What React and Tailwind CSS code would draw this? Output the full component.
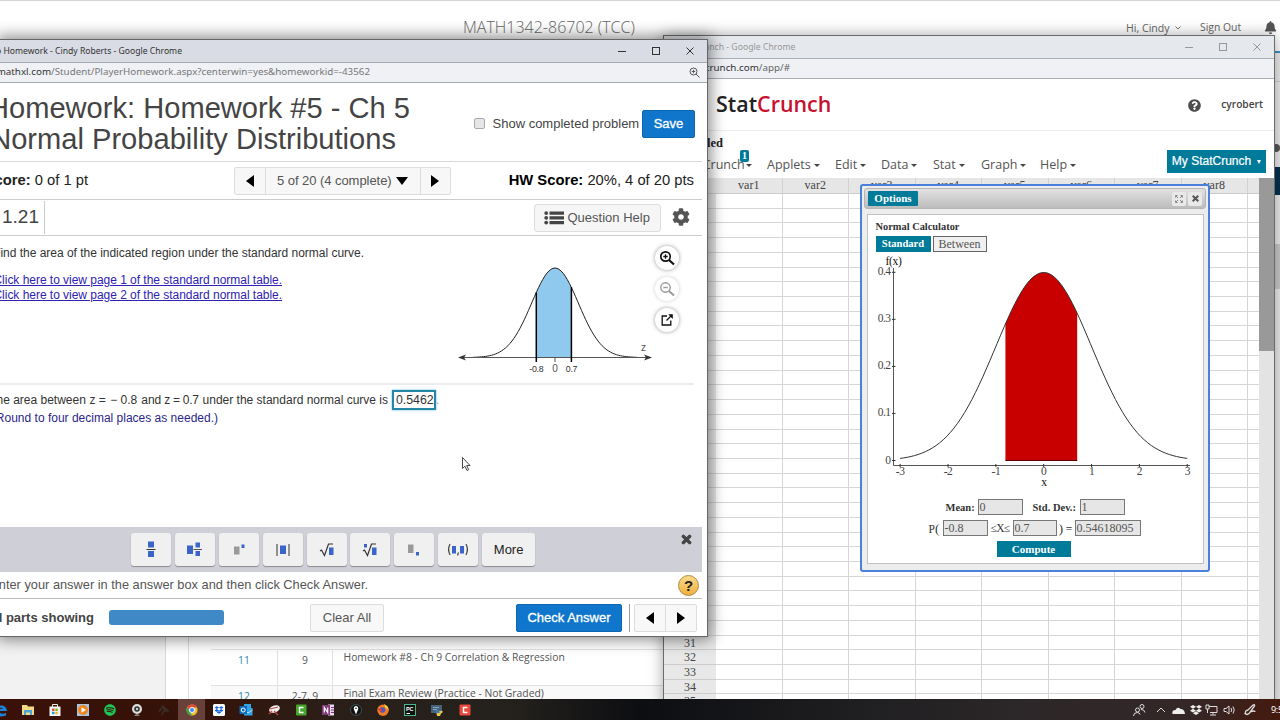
import { FaBell, FaCog, FaDropbox, FaQuestionCircle, FaSpotify, FaTimes } from "react-icons/fa";

/* ---------- shared bits ---------- */

function WindowButtons({ className = "" }) {
  return (
    <svg width="90" height="12" viewBox="0 0 90 12" fill="none" stroke="currentColor" className={className}>
      <path d="M2 6.5h8" />
      <rect x="36.5" y="2.5" width="7" height="7" />
      <path d="M70.5 2.5l7 7M77.5 2.5l-7 7" />
    </svg>
  );
}

function bell(cx, base, unit, height, from, to) {
  const points = [];
  for (let i = 0; i <= 80; i++) {
    const z = from + ((to - from) * i) / 80;
    points.push(`${(cx + z * unit).toFixed(2)} ${(base - height * Math.exp((-z * z) / 2)).toFixed(2)}`);
  }
  return points.join("L");
}

/* ---------- course page behind the windows ---------- */

function CoursePage() {
  return (
    <div className="flex h-[720px] w-[1280px] flex-col border-t border-[#d4d4d4] bg-white font-['Open_Sans',sans-serif] text-[#666]">
      <div className="flex h-[50px] items-start pt-[16px]">
        <div className="ml-[463px] w-[663px] text-[16px] leading-[21px] font-light">MATH1342-86702 (TCC)</div>
        <div className="flex w-[74px] items-center gap-[5px] text-[10.600px] leading-[22px]">
          Hi, Cindy
          <svg width="6" height="4" viewBox="0 0 6 4" fill="none" stroke="#777">
            <path d="M.5.5L3 3 5.500.5" />
          </svg>
        </div>
        <div className="w-[64px] text-[10.400px] leading-[21px]">Sign Out</div>
        <FaBell className="mt-[4px] h-[13px] w-[13px] shrink-0 text-[#555]" />
      </div>
      <div className="ml-auto flex w-[8px] flex-1 flex-col bg-[#ececec]">
        <div className="h-[2px] bg-[#3c93bd]" />
        <div className="mt-[28px] h-px bg-[#ccc]" />
        <div className="mt-[62px] h-[8px] rounded-full bg-[#555]" />
        <div className="mt-[15px] h-[28px] bg-[#06324d]" />
        <div className="mt-[49px] h-[45px] bg-[#c9c9c9]" />
      </div>
    </div>
  );
}

function AssignmentTable() {
  const rows = [
    { no: "11", chapter: "9", name: "Homework #8 - Ch 9 Correlation & Regression" },
    { no: "12", chapter: "2-7, 9", name: "Final Exam Review (Practice - Not Graded)" },
  ];
  return (
    <div className="absolute top-[630px] left-0 flex h-[70px] w-[664px] bg-white font-['Open_Sans',sans-serif] text-[#555]">
      <div className="w-[166px] border-r border-[#d8d8d8] bg-[#f2f2f2]" />
      <div className="w-[23px] border-r border-[#ddd]" />
      <div className="ml-[22px] flex-1 overflow-hidden pt-[19px]">
        {rows.map((row) => (
          <div key={row.no} className="flex h-[36px] border-t border-[#e2e2e2] text-[10.350px] odd:bg-white even:bg-[#f9f9f9]">
            <div className="w-[67px] border-r border-[#e2e2e2] pt-[3px] text-center text-[#2a87a8]">{row.no}</div>
            <div className="w-[55px] border-r border-[#e2e2e2] pt-[3px] text-center">{row.chapter}</div>
            <div className="pl-[10.500px] whitespace-nowrap">{row.name}</div>
          </div>
        ))}
      </div>
    </div>
  );
}

/* ---------- StatCrunch window ---------- */

const menus = [
  { label: "Applets", width: "w-[68px]" },
  { label: "Edit", width: "w-[46px]" },
  { label: "Data", width: "w-[52px]" },
  { label: "Stat", width: "w-[48px]" },
  { label: "Graph", width: "w-[59px]" },
  { label: "Help", width: "w-[50px]" },
];

function Caret() {
  return <span className="border-x-[3px] border-t-[3px] border-x-transparent border-t-[#444]" />;
}

function DataGrid() {
  const cols = [1, 2, 3, 4, 5, 6, 7, 8];
  return (
    <div className="flex h-[522px] overflow-hidden font-['Liberation_Serif',serif] text-[12px] text-[#444]">
      <div className="w-[595px] shrink-0">
        <div className="flex h-[16px] border-b border-[#ccc] bg-[#e6e6e6] leading-[15px]">
          <div className="w-[52px] shrink-0" />
          {cols.map((n) => (
            <div key={n} className="w-[66.5px] shrink-0 border-r border-[#d2d2d2] text-center">
              var{n}
            </div>
          ))}
        </div>
        {Array.from({ length: 35 }, (_, i) => (
          <div key={i} className="flex h-[14.73px] leading-[14px]">
            <div className="w-[52px] shrink-0 border-b border-[#ccc] bg-[#e8e8e8] text-center">{i + 1}</div>
            {cols.map((n) => (
              <div key={n} className="w-[66.5px] shrink-0 border-r border-b border-[#d6d6d6]" />
            ))}
            <div className="flex-1 border-b border-[#d6d6d6]" />
          </div>
        ))}
      </div>
      <div className="flex-1 bg-[#e3e3e3]">
        <div className="h-[173px] bg-[#999]" />
      </div>
    </div>
  );
}

function StatCrunchWindow() {
  return (
    <div className="absolute top-[35px] left-[663px] flex h-[672px] w-[612px] flex-col border border-[#6b6b6b] bg-white shadow-[0_0_14px_rgba(0,0,0,0.35)]">
      <div className="flex h-[23px] items-center border-b border-[#a9adb8] bg-[#e5e8ed] text-[#999]">
        <div className="flex w-[131.500px] justify-end pt-px font-['Noto_Sans',sans-serif] text-[8.700px] whitespace-nowrap">
          StatCrunch - Google Chrome
        </div>
        <WindowButtons className="ml-[387px]" />
      </div>
      <div className="flex h-[20px] items-center border-b border-[#a9adb8] bg-[#f0f1f5] font-['Noto_Sans',sans-serif] text-[9.800px] whitespace-nowrap text-[#666]">
        <div className="flex w-[126px] justify-end">
          <span className="text-[#333]">www.statcrunch.com</span>/app/#
        </div>
      </div>
      <div className="flex h-[52px] items-center border-b border-[#ededed] font-['Open_Sans',sans-serif]">
        <div className="ml-[52px] text-[21.400px] font-semibold text-[#222]">
          Stat<span className="text-[#c8102e]">Crunch</span>
        </div>
        <FaQuestionCircle className="mt-px ml-auto h-[13px] w-[13px] text-[#4d4d4d]" />
        <div className="mr-[11px] ml-[20px] pt-px text-[10.200px] font-semibold text-[#444]">cyrobert</div>
      </div>
      <div className="flex h-[47px]">
        <div className="flex w-[103px] flex-col">
          <div className="flex h-[25px] w-[59px] items-center justify-end font-['Liberation_Serif',serif] text-[12.500px] font-bold text-[#222]">
            Untitled
          </div>
          <div className="relative flex h-[18px] items-center gap-[3px] pl-[16px] font-['Open_Sans',sans-serif] text-[12.500px] text-[#555]">
            <span className="w-[63px] text-right">StatCrunch</span>
            <Caret />
            <span className="absolute -top-[6px] left-[76px] h-[12px] w-[9px] rounded-[2px] bg-[#007a99] text-center font-['Liberation_Serif',serif] text-[10px] leading-[12px] font-bold text-white">
              1
            </span>
          </div>
        </div>
        <div className="flex h-[18px] pt-[25px] font-['Open_Sans',sans-serif] text-[12.500px] leading-[18px] text-[#555]">
          {menus.map((m) => (
            <div key={m.label} className={`flex h-[18px] items-center gap-[3px] ${m.width}`}>
              {m.label}
              <Caret />
            </div>
          ))}
        </div>
        <div className="mt-[19px] mr-[8px] ml-auto flex h-[23px] w-[99px] items-center justify-center gap-[6px] bg-[#007a99] font-['Liberation_Sans',sans-serif] text-[12px] whitespace-nowrap text-white [-webkit-text-stroke:0.2px]">
          <span className="pb-[2px]">My StatCrunch</span>
          <span className="border-x-[2.500px] border-t-[4px] border-x-transparent border-t-white" />
        </div>
      </div>
      <DataGrid />
    </div>
  );
}

/* ---------- Normal calculator dialog ---------- */

function NormalChart() {
  const x = (z) => 175.7 + 47.85 * z;
  return (
    <svg width="333" height="238" viewBox="0 0 333 238" className="block font-['Liberation_Serif',serif] text-[11.500px]" fill="#444">
      <text x="17.500" y="11.500" fill="#111" letterSpacing="-0.3">f(x)</text>
      <path
        d={`M${x(-0.8)} 207.500L${bell(175.7, 207.5, 47.85, 188, -0.8, 0.7)}L${x(0.7)} 207.500Z`}
        fill="#c80000"
      />
      <path d={`M${x(-0.8)} 207.500H${x(0.7)}`} stroke="#600000" />
      <path d={`M${bell(175.7, 207.5, 47.85, 188, -3, 3)}`} fill="none" stroke="#333" />
      <path d="M25.500 15V212.500H322" fill="none" stroke="#555" />
      {[0, 1, 2, 3, 4].map((n) => (
        <g key={n}>
          <path d={`M24 ${207.5 - 47.05 * n}h3.500`} stroke="#333" />
          <text x="22.500" y={210.5 - 47.05 * n} textAnchor="end" letterSpacing="-0.5">
            {n === 0 ? "0" : `0.${n}`}
          </text>
        </g>
      ))}
      {[-3, -2, -1, 0, 1, 2, 3].map((n) => (
        <g key={n}>
          <path d={`M${x(n)} 211v3`} stroke="#333" />
          <text x={x(n)} y="221.500" textAnchor="middle" letterSpacing="-0.5">{n}</text>
        </g>
      ))}
      <text x="176" y="233" textAnchor="middle" fill="#111">x</text>
    </svg>
  );
}

function Field({ value, className }) {
  return (
    <div className={`h-[16px] border border-[#777] bg-[#e6e6e6] pl-px text-[12px] leading-[14px] text-[#555] ${className}`}>
      {value}
    </div>
  );
}

function CalculatorDialog() {
  return (
    <div className="absolute top-[184px] left-[860px] flex h-[388px] w-[350px] flex-col rounded-[3px] border-2 border-[#4a80dc] bg-[#ededed] px-[2px] pt-[2px] font-['Liberation_Serif',serif] text-[#333]">
      <div className="flex h-[21px] items-center gap-[2px] rounded-[3px] border border-[#b5b5b5] bg-linear-to-b from-[#e2e2e2] to-[#bcbcbc] px-[3px]">
        <div className="h-[15px] w-[50px] rounded-[1px] bg-[#007a99] text-center text-[11px] leading-[15px] font-bold text-white">Options</div>
        <div className="ml-auto flex h-[14px] w-[14px] items-center justify-center rounded-[2px] bg-[#e9e9e9]">
          <svg width="8" height="8" viewBox="0 0 8 8" fill="none" stroke="#888">
            <path d="M.5 2.500v-2h2M5.500.5h2v2M7.500 5.500v2h-2M2.500 7.500h-2v-2M1 1l2 2M7 1L5 3M7 7L5 5M1 7l2-2" />
          </svg>
        </div>
        <div className="flex h-[14px] w-[14px] items-center justify-center rounded-[2px] bg-[#e9e9e9]">
          <svg width="7" height="7" viewBox="0 0 7 7" stroke="#555" strokeWidth="2">
            <path d="M.7.7l5.600 5.600M6.300.7L.7 6.300" />
          </svg>
        </div>
      </div>
      <div className="mx-[2.500px] mt-[5px] flex h-[350px] flex-col border border-[#c2c2c2] bg-white">
        <div className="mt-[5px] ml-[8px] h-[14px] text-[10.400px] leading-[14px] font-bold">Normal Calculator</div>
        <div className="mt-[2px] ml-[8px] flex h-[16px] gap-[2px] text-[12px] leading-[16px]">
          <div className="w-[55px] bg-[#007a99] text-center text-[10.600px] font-bold text-white">Standard</div>
          <div className="w-[54px] border border-[#666] bg-[#f0f0f0] text-center leading-[14px] text-[#555]">Between</div>
        </div>
        <div className="mt-px">
          <NormalChart />
        </div>
        <div className="mt-[8px] ml-[78px] flex h-[16px] items-center text-[10.500px] font-bold">
          <span className="w-[32px] pt-px">Mean:</span>
          <Field value="0" className="w-[45px] font-normal" />
          <span className="w-[47px] pt-px pl-[10px] whitespace-nowrap">Std. Dev.:</span>
          <Field value="1" className="ml-[10px] w-[45px] font-normal" />
        </div>
        <div className="mt-[4px] ml-[61px] flex h-[17px] items-center text-[11.500px]">
          <span className="w-[14px] pt-[3px] leading-[14px]">
            P<span className="text-[13px]">(</span>
          </span>
          <Field value="-0.8" className="w-[45px]" />
          <span className="w-[25px] pt-[2px] text-center tracking-[-0.6px]">≤X≤</span>
          <Field value="0.7" className="w-[44px]" />
          <span className="w-[18px] pt-[3px] text-center leading-[14px] whitespace-nowrap">
            <span className="text-[13px]">)</span> =
          </span>
          <Field value="0.54618095" className="w-[66px]" />
        </div>
        <div className="mt-[5px] ml-[129px] h-[16px] w-[74px] bg-[#007a99] text-center text-[11px] leading-[16px] font-bold text-white">
          Compute
        </div>
      </div>
    </div>
  );
}

/* ---------- Homework window ---------- */

function Arrow({ left }) {
  return (
    <svg width="8" height="12" viewBox="0 0 8 12">
      <path d={left ? "M8 0v12L0 6z" : "M0 0v12l8-6z"} fill="#000" />
    </svg>
  );
}

function NormalCurve() {
  return (
    <svg width="200" height="115" viewBox="455 262 200 115" className="block font-['Liberation_Sans',sans-serif]" fill="#333">
      <path d={`M536.300 357.500L${bell(555, 357.5, 23.4, 89.5, -0.8, 0.7)}L571.400 357.500Z`} fill="#8fcaee" />
      <path d={`M${bell(555, 357.5, 23.4, 89.5, -3.5, 3.5)}`} fill="none" stroke="#222" />
      <path d="M462 357.500h187M555 357v5" stroke="#555" />
      <path d="M458 357.500l8-3-2 3 2 3zM652 357.500l-8-3 2 3-2 3z" fill="#333" />
      <path d="M536.300 292.500V362M571.400 287V362" stroke="#000" strokeWidth="1.500" />
      <text x="536.300" y="372" fontSize="8.800" letterSpacing="-0.300" textAnchor="middle">-0.8</text>
      <text x="555" y="371.500" fontSize="10" textAnchor="middle" fill="#555">0</text>
      <text x="571.500" y="372" fontSize="8.800" letterSpacing="-0.300" textAnchor="middle">0.7</text>
      <text x="643.500" y="350.500" fontSize="10" textAnchor="middle" fill="#555">z</text>
    </svg>
  );
}

function ZoomTools() {
  const base = "flex h-[24px] w-[24px] items-center justify-center rounded-full bg-white";
  return (
    <div className="flex flex-col gap-[7px]">
      <div className={`${base} shadow-[0_0_4px_rgba(0,0,0,0.4)]`}>
        <svg width="16" height="16" viewBox="0 0 16 16" fill="none" stroke="#111" strokeWidth="1.700">
          <circle cx="6.500" cy="6.500" r="4.700" />
          <path d="M10 10l5 4.500" strokeWidth="2.200" />
          <path d="M6.500 4.300v4.400M4.300 6.500h4.400" strokeWidth="1.300" />
        </svg>
      </div>
      <div className={`${base} shadow-[0_0_4px_rgba(0,0,0,0.2)]`}>
        <svg width="16" height="16" viewBox="0 0 16 16" fill="none" stroke="#999" strokeWidth="1.400">
          <circle cx="6.500" cy="6.500" r="4.700" />
          <path d="M10 10l5 4.500" strokeWidth="2" />
          <path d="M4.300 6.500h4.400" />
        </svg>
      </div>
      <div className={`${base} shadow-[0_0_4px_rgba(0,0,0,0.4)]`}>
        <svg width="12" height="12" viewBox="0 0 12 12" fill="none" stroke="#111" strokeWidth="1.300">
          <path d="M6 2H1.200v9h8.600V6.500" />
          <path d="M5.500 6.500L10.500 1.500" />
          <path d="M7.200.3H11.800v4.600z" fill="#111" stroke="none" />
        </svg>
      </div>
    </div>
  );
}

const blue = "#3b64c8";

const mathKeys = [
  <g key="fraction">
    <rect x="12" y="3.500" width="6" height="6" fill={blue} />
    <rect x="12" y="13" width="6" height="6" fill={blue} />
    <path d="M10.500 11.500h9" stroke="#333" />
  </g>,
  <g key="mixed">
    <rect x="7" y="7.500" width="6" height="8.500" fill={blue} />
    <rect x="15.500" y="4.500" width="4.500" height="5" fill={blue} />
    <rect x="15.500" y="13" width="4.500" height="5" fill={blue} />
    <path d="M13.500 11.500h8.500" stroke="#555" />
  </g>,
  <g key="exponent">
    <rect x="10" y="8.500" width="5.500" height="8" fill="#999" />
    <rect x="17.500" y="6.500" width="3" height="3.500" fill={blue} />
  </g>,
  <g key="absolute">
    <rect x="12" y="7.500" width="6" height="8.500" fill={blue} />
    <path d="M9 6v12M21 6v12" stroke="#333" />
  </g>,
  <g key="root">
    <rect x="17" y="9.500" width="4.500" height="7.500" fill={blue} />
    <path d="M8 13l1.500-1 3 5.500L16.500 6H21" fill="none" stroke="#333" strokeWidth="1.200" />
  </g>,
  <g key="nth-root">
    <rect x="9" y="6" width="3" height="3.500" fill={blue} />
    <rect x="17" y="9.500" width="4.500" height="7.500" fill={blue} />
    <path d="M8 13l1.500-1 3 5.500L16.500 6H21" fill="none" stroke="#333" strokeWidth="1.200" />
  </g>,
  <g key="subscript">
    <rect x="9" y="6.500" width="5.500" height="8.500" fill="#999" />
    <rect x="17" y="14" width="3" height="3.500" fill={blue} />
  </g>,
  <g key="interval">
    <rect x="9" y="8" width="4" height="7.500" fill={blue} />
    <rect x="17" y="8" width="4" height="7.500" fill={blue} />
    <path d="M7 6Q4.200 11.500 7 17M23 6Q25.800 11.500 23 17M15.500 14.500L14.500 17.500" fill="none" stroke="#444" strokeWidth="1.200" />
  </g>,
];

function MathToolbar() {
  return (
    <div className="flex h-[45px] w-[702px] items-start gap-[3.900px] bg-[#cfcfd8] pt-[6px] pl-[131px]">
      {mathKeys.map((icon) => (
        <div key={icon.key} className="flex h-[33px] w-[40px] justify-center rounded-[3px] bg-[#f0f0f0] pt-[5px] shadow-[0_1px_1px_#8a8a90]">
          <svg width="30" height="24" viewBox="0 0 30 24">{icon}</svg>
        </div>
      ))}
      <div className="h-[33px] w-[53px] rounded-[3px] bg-[#f0f0f0] text-center text-[13px] leading-[33px] text-[#222] shadow-[0_1px_1px_#8a8a90]">
        More
      </div>
      <FaTimes className="mr-[9px] ml-auto h-[13px] w-[13px] text-[#444]" stroke="#444" strokeWidth="40" />
    </div>
  );
}

function HomeworkWindow() {
  return (
    <div className="absolute top-[39px] left-0 flex h-[598px] w-[708px] flex-col overflow-visible border-t border-r border-b border-[#666] bg-white font-['Liberation_Sans',sans-serif] text-[#444] shadow-[0_0_14px_3px_rgba(0,0,0,0.45)]">
      <div className="flex h-[23px] shrink-0 items-center border-b border-[#a5a9b4] bg-[#d9dce4] font-['Noto_Sans',sans-serif] text-[8.600px] whitespace-nowrap text-[#333]">
        <div className="flex w-[182px] justify-end">Do Homework - Cindy Roberts - Google Chrome</div>
        <WindowButtons className="ml-[434px] text-[#333]" />
      </div>
      <div className="flex h-[20px] shrink-0 items-center border-b border-[#a5a9b4] bg-[#eff1f5] font-['Noto_Sans',sans-serif] text-[9.800px] whitespace-nowrap text-[#777]">
        <div className="flex w-[370px] justify-end">
          <span className="text-[#333]">www.mathxl.com</span>/Student/PlayerHomework.aspx?centerwin=yes&amp;homeworkid=-43562
        </div>
        <svg width="11" height="11" viewBox="0 0 11 11" fill="none" stroke="#555" className="ml-[318.500px]">
          <circle cx="4.500" cy="4.500" r="3.500" />
          <path d="M7 7l3.500 3.500M4.500 2.800v3.400M2.800 4.500h3.400" />
        </svg>
      </div>

      <div className="flex h-[79px] w-[702px] shrink-0 border-b border-[#d8d8d8]">
        <div className="w-[410px] pt-[10px] text-[29.100px] leading-[31px] whitespace-nowrap">
          <div className="flex justify-end">Homework: Homework #5 - Ch 5</div>
          <div className="flex w-[396px] justify-end">Normal Probability Distributions</div>
        </div>
        <div className="mt-[35px] ml-[64px] h-[11px] w-[11px] rounded-[2px] border border-[#aaa] bg-[#e6e6e6]" />
        <div className="mt-[31px] ml-[7.500px] w-[149.500px] text-[13px] leading-[19px]">Show completed problem</div>
        <div className="mt-[27px] h-[28px] w-[53px] rounded-[2px] border border-[#0c66b0] bg-[#0f76cb] text-center text-[13px] leading-[25px] text-white [-webkit-text-stroke:0.300px]">
          Save
        </div>
      </div>

      <div className="flex h-[38px] w-[702px] shrink-0 items-center border-b border-[#ccc] text-[14.750px] text-[#222]">
        <div className="flex w-[88px] justify-end whitespace-pre">
          <b>Score: </b>0 of 1 pt
        </div>
        <div className="ml-[146px] flex h-[28px] w-[217px] rounded-[2px] border border-[#ddd] bg-[#f7f7f7] text-[13px] text-[#555]">
          <div className="flex w-[31px] items-center justify-center border-r border-[#ddd]">
            <Arrow left />
          </div>
          <div className="flex w-[155px] items-center gap-[4px] border-r border-[#ddd] pl-[11px] whitespace-nowrap">
            <span className="-tracking-[0.050px]">5 of 20 (4 complete)</span>
            <span className="border-x-[6px] border-t-[8px] border-x-transparent border-t-black" />
          </div>
          <div className="flex flex-1 items-center justify-center pr-px">
            <Arrow />
          </div>
        </div>
        <div className="ml-auto pr-[8px] whitespace-pre">
          <b className="text-black">HW Score: </b>20%, 4 of 20 pts
        </div>
      </div>

      <div className="flex h-[36px] w-[702px] shrink-0 items-center border-b border-[#ccc]">
        <div className="flex h-[33px] w-[45px] items-center justify-end border-r border-[#ccc] pr-[5px] text-[19px]">1.21</div>
        <div className="ml-auto flex h-[28px] w-[127px] items-center rounded-[3px] border border-[#ddd] bg-[#f6f6f6] pl-[9px] text-[13px] text-[#555]">
          <svg width="20" height="14" viewBox="0 0 20 14" fill="#444" className="mr-[3.500px]">
            <path d="M5.500.5H20v3.200H5.500zM5.500 5.200H20v3.200H5.500zM5.500 10H20v3.200H5.500z" />
            <circle cx="2.200" cy="2.100" r="1.900" />
            <circle cx="2.200" cy="6.800" r="1.900" />
            <circle cx="2.200" cy="11.600" r="1.900" />
          </svg>
          Question Help
        </div>
        <FaCog className="mr-[12px] mb-[2px] ml-[11px] h-[18px] w-[18px] text-[#555]" />
      </div>

      <div className="flex h-[149px] w-[694px] shrink-0 border-b-2 border-[#ececec] text-[12px] leading-[15px]">
        <div className="w-[364px] pt-[10px] whitespace-nowrap text-[#333]">
          <div className="flex justify-end -tracking-[0.020px]">Find the area of the indicated region under the standard normal curve.</div>
          <div className="mt-[12px] w-[282px] -tracking-[0.030px] text-[#2d22b4]">
            <div className="flex justify-end"><u>Click here to view page 1 of the standard normal table.</u></div>
            <div className="flex justify-end"><u>Click here to view page 2 of the standard normal table.</u></div>
          </div>
        </div>
        <div className="mt-[26px] ml-[91px] w-[200px]">
          <NormalCurve />
        </div>
        <div className="mt-[10px]">
          <ZoomTools />
        </div>
      </div>

      <div className="h-[142px] shrink-0 pt-[5px] text-[12px] text-[#333]">
        <div className="flex h-[20px] items-center whitespace-nowrap">
          <div className="flex w-[388px] justify-end">
            <span>The area between</span>
            <span className="ml-[3.500px]">z =</span>
            <span className="mr-[4px] ml-[4.500px]">− 0.8</span>
            <span>and</span>
            <span className="mr-[4px] ml-[3px] tracking-[-0.3px]">z = 0.7</span>
            <span>under the standard normal curve is</span>
          </div>
          <div className="ml-[4px] h-[20px] w-[44px] border-2 border-[#2387a5] pl-[2px] text-[12.300px] leading-[16px] shadow-[0_0_2px_#5db5dd]">0.5462</div>
          <span className="text-[#aaa]">.</span>
        </div>
        <div className="flex h-[16px] w-[218px] items-center justify-end whitespace-nowrap text-[#2a1f8c]">(Round to four decimal places as needed.)</div>
      </div>

      <MathToolbar />

      <div className="flex h-[27px] w-[702px] shrink-0 items-center border-b border-[#bbb] text-[12.800px] text-[#555]">
        <div className="flex w-[368px] justify-end whitespace-nowrap">Enter your answer in the answer box and then click Check Answer.</div>
        <div className="mr-[3px] ml-auto h-[21px] w-[21px] rounded-full border border-[#b08a3a] bg-linear-to-b from-[#fbd98a] to-[#eeb13c] text-center text-[15px] leading-[19px] font-bold text-[#222]">
          ?
        </div>
      </div>

      <div className="flex h-[37px] shrink-0 items-center text-[13px]">
        <div className="flex w-[94px] justify-end font-bold whitespace-nowrap">All parts showing</div>
        <div className="ml-[15px] h-[15px] w-[115px] rounded-[3px] bg-[#3f89c6]" />
        <div className="ml-[86px] h-[28px] w-[74px] rounded-[2px] border border-[#ddd] bg-[#f8f8f8] text-center leading-[25px] text-[#555]">Clear All</div>
        <div className="ml-[132px] h-[28px] w-[106px] rounded-[2px] border border-[#0c66b0] bg-[#0f76cb] text-center leading-[25px] text-white [-webkit-text-stroke:0.300px]">
          Check Answer
        </div>
        <div className="ml-[7px] h-[28px] w-px bg-[#999]" />
        <div className="ml-[4px] flex h-[28px] w-[63px] rounded-[2px] border border-[#ddd] bg-[#f8f8f8]">
          <div className="flex flex-1 items-center justify-center border-r border-[#ddd]">
            <Arrow left />
          </div>
          <div className="flex flex-1 items-center justify-center">
            <Arrow />
          </div>
        </div>
      </div>
    </div>
  );
}

/* ---------- taskbar ---------- */

const apps = [
  <path key="edge" d="M1 7C2 2 12 0 13 8H5q1 4 7 2v2.500Q1 16 2 8 4 5 9 6 7 3 1 7" fill="#1b84d8" />,
  <g key="explorer">
    <path d="M1 2h5l1 1.500h6V12H1z" fill="#f5d886" />
    <path d="M3 12V7h8v5H9V9.500H5V12z" fill="#4ba6d8" />
  </g>,
  <g key="store">
    <path d="M4.500 4V1.500h5V4" fill="none" stroke="#eee" />
    <path d="M1.500 3.500h11v9.500h-11z" fill="#f4f4f4" />
    <path d="M4 5.500h2.500V8H4z" fill="#e5512c" />
    <path d="M7.300 5.500h2.500V8H7.300z" fill="#7ab62c" />
    <path d="M4 8.800h2.500v2.400H4z" fill="#1c9bd6" />
    <path d="M7.300 8.800h2.500v2.400H7.300z" fill="#f2b41e" />
  </g>,
  <g key="player">
    <rect x="1" y="1" width="12" height="12" fill="#a9c4df" />
    <circle cx="7" cy="7" r="5" fill="#ef8421" />
    <path d="M5.500 4.200v5.600L10 7z" fill="#fff" />
  </g>,
  <g key="spotify">
    <FaSpotify x="1" y="1" size="12" color="#1ec457" />
  </g>,
  <g key="webcam">
    <circle cx="7" cy="6" r="5" fill="#ddd" />
    <circle cx="7" cy="6" r="2.800" fill="#333" />
    <circle cx="7" cy="6" r="1.200" fill="#ccc" />
    <path d="M4 12.500q3-2 6 0z" fill="#eee" />
  </g>,
  <path key="plane" d="M2 9l4-6 2 5h4M5 12l3-7 3 3" fill="none" stroke="#3b2e28" strokeWidth="1.500" />,
  <g key="chrome">
    <circle cx="7" cy="7" r="5.500" fill="#f1c232" />
    <path d="M2.200 4.200A5.500 5.500 0 0112 4.500H7L4.500 8z" fill="#df4a3c" />
    <path d="M2.200 4.200L5 9l2 3.500A5.500 5.500 0 012.200 4.200" fill="#35a354" />
    <circle cx="7" cy="7" r="2.500" fill="#4285f4" stroke="#fff" />
  </g>,
  <g key="dropbox">
    <rect x="1" y="1" width="12" height="12" rx="1.500" fill="#fff" />
    <FaDropbox x="2.500" y="2.500" size="9" color="#0d62e5" />
  </g>,
  <g key="outlook">
    <path d="M5 1h7v4h1.500v7.500H5z" fill="#32a4e6" />
    <path d="M5 7l4 3 4.500-3" fill="none" stroke="#bfe2f7" />
    <rect x="0.500" y="3" width="7.500" height="8" fill="#0b69bd" />
    <circle cx="4.200" cy="7" r="2" fill="none" stroke="#fff" />
  </g>,
  <g key="snip">
    <ellipse cx="7.500" cy="6" rx="5.500" ry="3.500" fill="#f0f0f0" transform="rotate(-20 7.500 6)" />
    <path d="M3 6l8-2M7 8l4 4M5 8l-3 3" stroke="#c44b45" strokeWidth="1.200" />
  </g>,
  <g key="camtasia">
    <rect x="2" y="1.500" width="10.500" height="11" rx="1" fill="#45a82c" />
    <path d="M9.500 4.500h-4v5h4" fill="none" stroke="#fff" strokeWidth="1.500" />
  </g>,
  <g key="onenote">
    <path d="M7 1.500h6v11H7z" fill="#e9d7ec" />
    <path d="M10 4.500h3M10 7h3M10 9.500h3" stroke="#80397b" />
    <rect x="1" y="2" width="8" height="10" fill="#80397b" />
    <path d="M3.300 9.500v-5l3.400 5v-5" fill="none" stroke="#fff" strokeWidth="1.200" />
  </g>,
  <g key="pin">
    <circle cx="7" cy="7" r="5.500" fill="#111" stroke="#3a4f55" />
    <path d="M7 11.500L4.800 6a2.300 2.300 0 114.400 0z" fill="#fff" />
    <circle cx="7" cy="5.300" r="0.800" fill="#111" />
  </g>,
  <g key="firefox">
    <circle cx="7" cy="7.200" r="5.700" fill="#ef7a28" />
    <path d="M8 1q5 2 4.500 7-1-3-3-3z" fill="#f9cf3c" />
    <circle cx="6.500" cy="7" r="2.700" fill="#4b56c4" />
    <path d="M1.500 6q3-1.500 5 1-1 2.500-3 1z" fill="#e0412e" />
  </g>,
  <g key="pycharm">
    <rect x="1.500" y="1.500" width="11" height="11" fill="#111" stroke="#48b98a" />
    <text x="2.900" y="7.500" fontSize="5.500" fontWeight="bold" fill="#fff">PC</text>
    <path d="M3.500 10.500h3.500" stroke="#fff" />
  </g>,
  <g key="python">
    <rect x="1" y="2" width="11" height="8" fill="#45627a" />
    <path d="M3 4.500h6M3 6.500h4" stroke="#8ba6b8" />
    <path d="M6 8h4q2-1 3 1l-2 1.500-1 2.500H7z" fill="#e9c548" />
    <path d="M5.500 7h4v3h-4z" fill="#3c78a8" />
  </g>,
  <g key="recorder">
    <rect x="1.500" y="1.500" width="11" height="11" rx="1" fill="#e9483a" />
    <path d="M9.500 4.500h-4v5h4" fill="none" stroke="#fff" strokeWidth="1.500" />
  </g>,
];

function Taskbar() {
  return (
    <div className="absolute top-[699px] left-0 flex h-[21px] w-[1280px] items-center overflow-hidden bg-[linear-gradient(90deg,#3b1108_0%,#351208_15%,#2a1f18_26%,#24211d_40%,#0d0e12_50%,#1e1e20_66%,#2c2728_80%,#342728_93%,#45190d_100%)] text-white">
      <div className="-ml-[13px] flex h-full shrink-0">
        {apps.map((app) => (
          <div
            key={app.key}
            className={`flex h-full w-[27.300px] items-center justify-center ${app.key === "chrome" ? "bg-[#68423a]" : ""}`}
          >
            <svg width="14" height="14" viewBox="0 0 14 14" className="mt-px font-['Liberation_Sans',sans-serif]">{app}</svg>
          </div>
        ))}
      </div>
      <svg width="130" height="16" viewBox="0 0 130 16" fill="none" stroke="#ddd" className="ml-auto shrink-0">
        {/* people */}
        <circle cx="10" cy="4.500" r="2" />
        <circle cx="5.500" cy="8" r="2" />
        <path d="M1.500 14q0-3.500 4-3.500 2 0 2.500 2M9 7.500q3-.5 4 3" />
        {/* overflow chevron */}
        <path d="M25 10l4-4 4 4" />
        {/* cloud */}
        <path d="M40.500 12q-1-4 3-4 2-4 5-1 4 0 4.500 5z" fill="#eee" stroke="none" />
        <FaDropbox x="58" y="2" size="12" fill="#eee" stroke="none" />
        {/* network */}
        <path d="M77 4.500h8v6h-7M81 10.500v2M78 13h6M74 3h3v4h-3zM75.500 7v4" />
        {/* volume */}
        <path d="M92 6.500h2l3-2.500v8l-3-2.500h-2zM99 6q1.500 2 0 4M101 4.500q2.500 3.500 0 7" />
        {/* pen */}
        <path d="M114 12q-2-3 2-4l5-5q2-1 1.500 1l-5 7q-3 3-5 0M118 10q5-2 5 0" strokeWidth="1.300" />
      </svg>
      <div className="mr-[-31px] ml-[9px] w-[40px] shrink-0 pt-px font-['Noto_Sans',sans-serif] text-[9px] tracking-[-0.3px]">9:54 PM</div>
    </div>
  );
}

export default function App() {
  return (
    <div className="relative h-[720px] w-[1280px] overflow-hidden bg-white">
      <CoursePage />
      <AssignmentTable />
      <StatCrunchWindow />
      <CalculatorDialog />
      <HomeworkWindow />
      <Taskbar />

      {/* mouse pointer */}
      <svg width="10" height="15" viewBox="0 0 10 15" className="absolute top-[457px] left-[462px]">
        <path d="M.5.5v11l2.500-2.300 2 4.300 1.700-.8-2-4.200h3.300z" fill="#fff" stroke="#333" strokeWidth="0.900" />
      </svg>
    </div>
  );
}
